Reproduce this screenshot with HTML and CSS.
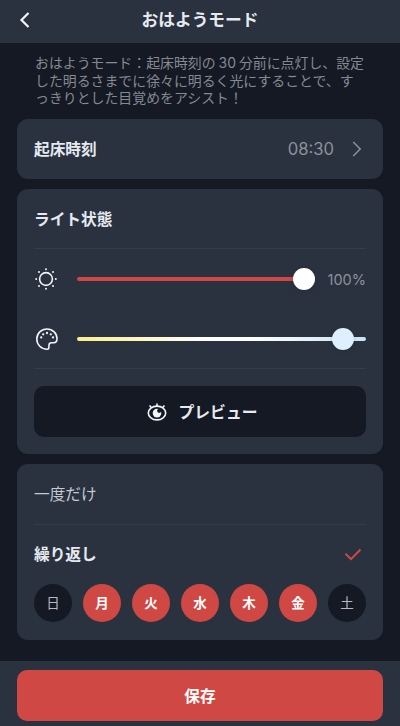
FILE: index.html
```
<!DOCTYPE html>
<html lang="ja">
<head>
    <meta charset="UTF-8">
    <meta name="viewport" content="width=device-width, initial-scale=1.0">
    <title>おはようモード</title>
    <link rel="stylesheet" href="styles.css">
</head>
<body>
    <header class="header">
        <button class="back" aria-label="戻る">
            <svg width="12" height="18" viewBox="0 0 12 18"><path d="M9.5 2 2.5 9l7 7"/></svg>
        </button>
        <h1>おはようモード</h1>
    </header>

    <main class="content">
        <p class="description">おはようモード：起床時刻の<span class="minutes">30</span>分前に点灯し、設定<br>した明るさまでに徐々に明るく光にすることで、す<br>っきりとした目覚めをアシスト！</p>

        <section class="card time-card">
            <h2>起床時刻</h2>
            <span class="time">08:30</span>
            <svg class="chevron" width="10" height="16" viewBox="0 0 10 16"><path d="M1.2 1 8.2 8l-7 7"/></svg>
        </section>

        <section class="card light-card">
            <h2 class="card-title">ライト状態</h2>
            <div class="sliders">
                <div class="slider-row">
                    <svg class="icon" width="24" height="24" viewBox="0 0 24 24">
                        <circle cx="12" cy="12" r="6.4"/>
                        <g class="dots">
                            <circle cx="12" cy="2.2" r="1"/>
                            <circle cx="19" cy="5" r="1"/>
                            <circle cx="21.8" cy="12" r="1"/>
                            <circle cx="19" cy="19" r="1"/>
                            <circle cx="12" cy="21.8" r="1"/>
                            <circle cx="5" cy="19" r="1"/>
                            <circle cx="2.2" cy="12" r="1"/>
                            <circle cx="5" cy="5" r="1"/>
                        </g>
                    </svg>
                    <div class="track brightness"><span class="thumb" style="left: 100%"></span></div>
                    <span class="percent">100%</span>
                </div>
                <div class="slider-row">
                    <svg class="icon" width="24" height="24" viewBox="0 0 24 24">
                        <path d="M14.8 21.2C14.6 22 13.9 22.2 13 22.2 7.3 22.2 2.8 17.8 2.8 12.1 2.8 6.4 7.3 2 13 2s10 4.3 10 9.6c0 2.8-1 4.2-3.2 4.2h-2.2c-1.9 0-2.6.8-2.6 2.4z"/>
                        <g class="dots">
                            <circle cx="7.2" cy="10.4" r="1.15"/>
                            <circle cx="9.2" cy="7.3" r="1.15"/>
                            <circle cx="13" cy="6" r="1.15"/>
                            <circle cx="16.8" cy="7.3" r="1.15"/>
                            <circle cx="19" cy="10.4" r="1.15"/>
                        </g>
                    </svg>
                    <div class="track color"><span class="thumb" style="left: 92%"></span></div>
                </div>
            </div>
            <button class="preview">
                <svg class="eye" width="22" height="20" viewBox="0 0 22 20">
                    <ellipse cx="11" cy="11" rx="8.7" ry="6.9"/>
                    <path d="M11 4V1.6M5.2 5.6 3.6 3.5M16.8 5.6l1.6-2.1"/>
                    <circle class="pupil" cx="11" cy="11.1" r="4.3"/>
                    <circle class="glint" cx="13.2" cy="8.8" r="2.1"/>
                </svg>
                プレビュー
            </button>
        </section>

        <section class="card repeat-card">
            <div class="once">一度だけ</div>
            <div class="repeat">
                <h2>繰り返し</h2>
                <svg class="check" width="18" height="13" viewBox="0 0 18 13"><path d="M1.5 5.8 7 11.2 16.5 1.5"/></svg>
            </div>
            <div class="days">
                <span class="day">日</span>
                <span class="day active">月</span>
                <span class="day active">火</span>
                <span class="day active">水</span>
                <span class="day active">木</span>
                <span class="day active">金</span>
                <span class="day">土</span>
            </div>
        </section>
    </main>

    <footer class="footer">
        <button class="save">保存</button>
    </footer>
</body>
</html>
```
FILE: styles.css
```
* {
    box-sizing: border-box;
}

body {
    margin: 0;
    height: 726px;
    display: flex;
    flex-direction: column;
    overflow: hidden;
    background-color: #141923;
    color: #e6eaf0;
    font-family: Inter, "Noto Sans CJK JP", sans-serif;
    font-size: 16px;
}

h1,
h2 {
    margin: 0;
    font-size: 15.7px;
    font-weight: 600;
    line-height: 24px;
}

button {
    border: none;
    padding: 0;
    color: inherit;
    font-family: inherit;
    cursor: pointer;
}

svg {
    display: block;
    flex: none;
    fill: none;
    stroke: #f2f4f7;
    stroke-width: 1.6;
}

.header {
    height: 43px;
    flex: none;
    display: grid;
    grid-template-columns: 60px 1fr 60px;
    align-items: center;
    padding-bottom: 4px;
    background-color: #2a3240;
    text-align: center;
}

.header h1 {
    padding-top: 1px;
    font-size: 16.7px;
}

.back {
    background: none;
    padding-left: 19px;
}

.back svg {
    stroke-width: 2.2;
}

.content {
    flex: 1;
    padding: 12px 17px 0;
}

.description {
    margin: 0 0 11px;
    padding-left: 18px;
    color: #858a92;
    font-size: 13.9px;
    line-height: 17.7px;
    white-space: nowrap;
}

.minutes {
    margin: 0 3px;
}

.card {
    margin-bottom: 10px;
    padding: 0 17px;
    border-radius: 11px;
    background-color: #2a3240;
}

.time-card {
    height: 60px;
    display: flex;
    align-items: center;
    padding-right: 21px;
}

.time-card h2,
.repeat h2 {
    padding-top: 1px;
}

.time {
    margin-left: auto;
    color: #8d929b;
    font-size: 16.6px;
}

.chevron {
    margin-left: 18px;
    stroke: #8d929b;
    stroke-width: 1.5;
}

.light-card {
    height: 265px;
}

.card-title {
    height: 59px;
    line-height: 61px;
}

.sliders {
    border-top: 1px solid #353c49;
    border-bottom: 1px solid #353c49;
}

.slider-row {
    height: 60px;
    display: flex;
    align-items: center;
}

.slider-row:last-child {
    height: 59px;
}

.icon {
    margin-right: 19px;
}

.track {
    position: relative;
    height: 4px;
    border-radius: 2px;
}

.brightness {
    width: 227px;
    background-color: #d04843;
}

.color {
    flex: 1;
    background: linear-gradient(to right, #fbee8b, #fff 45%, #fff 60%, #c9e4f3);
}

/* knob sits centered on the current value */
.thumb {
    position: absolute;
    top: -9px;
    width: 22px;
    height: 22px;
    margin-left: -11px;
    border-radius: 50%;
    background-color: #fff;
    box-shadow: 0 1px 4px rgba(0, 0, 0, 0.15);
}

.color .thumb {
    background-color: #deeffd;
}

.percent {
    margin-left: auto;
    color: #8d929b;
    font-size: 14.5px;
}

.dots {
    fill: #f2f4f7;
    stroke: none;
}

.preview {
    width: 100%;
    height: 51px;
    display: flex;
    align-items: center;
    justify-content: center;
    gap: 11px;
    margin-top: 17px;
    padding-left: 3px;
    border-radius: 10px;
    background-color: #141923;
    font-size: 15.8px;
    font-weight: 600;
}

.pupil {
    fill: #f2f4f7;
    stroke: none;
}

.glint {
    fill: #141923;
    stroke: none;
}

.repeat-card {
    height: 176px;
}

.once {
    height: 61px;
    line-height: 62px;
    border-bottom: 1px solid #353c49;
    color: #c5cad2;
    font-size: 15.7px;
}

.repeat {
    height: 59px;
    display: flex;
    align-items: center;
    justify-content: space-between;
    padding-right: 4px;
}

.check {
    stroke: #d04843;
    stroke-width: 2;
}

.days {
    display: flex;
    justify-content: space-between;
}

.day {
    width: 38px;
    height: 38px;
    border-radius: 50%;
    background-color: #141923;
    color: #b5bac2;
    font-size: 13.5px;
    line-height: 38px;
    text-align: center;
}

.day.active {
    background-color: #d04843;
    color: #fff;
    font-weight: 600;
}

.footer {
    height: 65px;
    flex: none;
    padding: 9px 17px 0;
    background-color: #2a3240;
}

.save {
    width: 100%;
    height: 51px;
    border-radius: 10px;
    background-color: #d04843;
    color: #fff;
    font-size: 15.7px;
    font-weight: 600;
}
```
